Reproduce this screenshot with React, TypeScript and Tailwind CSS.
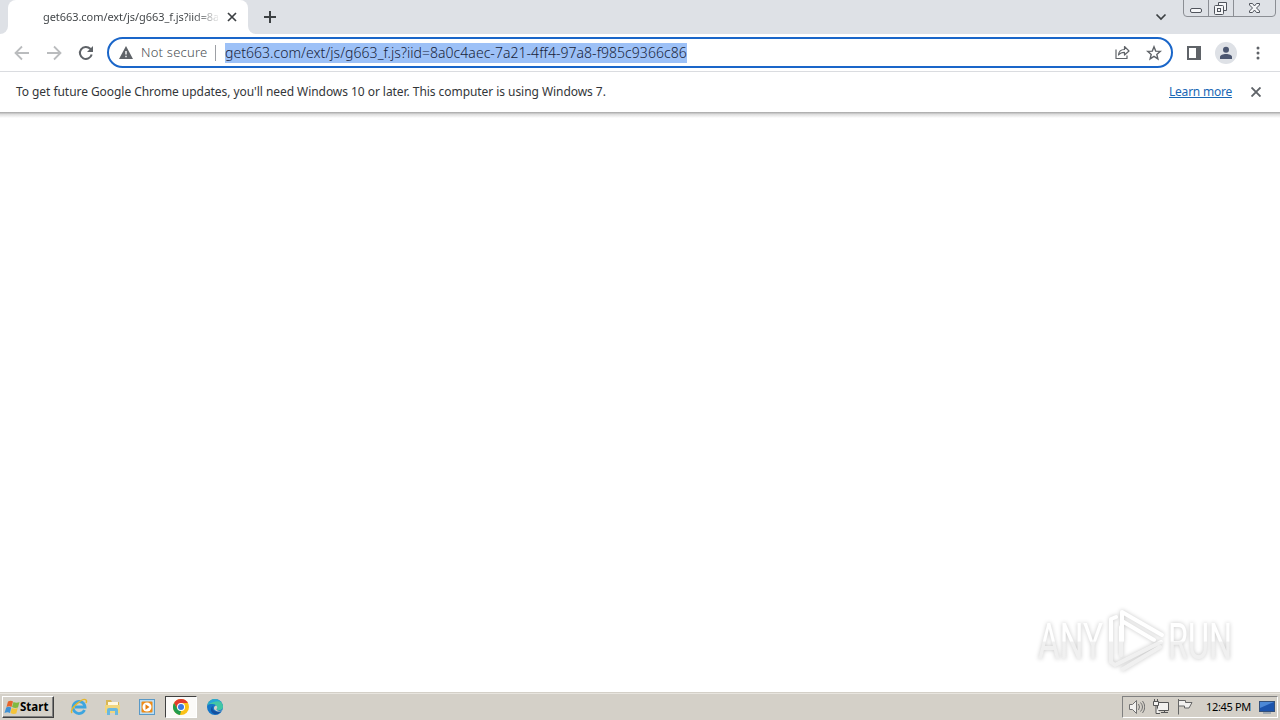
import type { ReactNode } from "react";

const ui = "font-['Noto_Sans','Open_Sans',sans-serif]";

const TabStrip = () => (
    <div className="relative flex h-[34px] bg-[#dee1e6]">
        <div className="w-2 bg-white">
            <div className="h-[34px] rounded-br-lg bg-[#dee1e6]" />
        </div>
        <div className="flex h-[34px] w-60 items-center rounded-t-lg bg-white pl-[35px]">
            <div className="w-[175px] whitespace-nowrap bg-linear-to-r from-[#3c4043] from-85% to-[#3c404320] bg-clip-text text-[11px] leading-4 tracking-[-0.06px] text-transparent">
                get663.com/ext/js/g663_f.js?iid=8a
            </div>
            <svg className="ml-[9px] h-[10px] w-[10px]" viewBox="0 0 10 10" stroke="#3c4043" strokeWidth="1.7">
                <path d="M1 1l8 8M9 1L1 9" />
            </svg>
        </div>
        <div className="w-2 bg-white">
            <div className="h-[34px] rounded-bl-lg bg-[#dee1e6]" />
        </div>
        <svg className="mt-[11px] ml-2 h-3 w-3" viewBox="0 0 12 12" stroke="#3c4043" strokeWidth="2">
            <path d="M6 0v12M0 6h12" />
        </svg>
        <svg className="mt-[13px] ml-auto h-2 w-3" viewBox="0 0 12 8" fill="none" stroke="#3c4043" strokeWidth="1.7">
            <path d="M1.500 1.500L6 6l4.500-4.500" />
        </svg>
        <svg className="mr-1 ml-4 h-[17px] w-[93px]" viewBox="0 0 93 17" fill="none" stroke="#8b8e94">
            <path d="M.5 0v13q0 3.500 3.500 3.500h85q3.500 0 3.500-3.500V0M25.500 0v16M50.500 0v16" />
            <g stroke="#50545c">
                <rect x="7.500" y="8.500" width="11" height="4" rx="1.500" fill="#f5f6f8" />
                <path d="M35.500 5.500v-3h8v8h-3" fill="#f5f6f8" />
                <rect x="31.500" y="5.500" width="9" height="9" rx="1" fill="#f5f6f8" />
                <rect x="34.500" y="8.500" width="3" height="3" />
                <path
                    d="M66.500 3.500h3l2 2.500 2-2.500h3v1.500l-3 3 3 3v1.500h-3l-2-2.500-2 2.500h-3v-1.500l3-3-3-3z"
                    fill="#f5f6f8"
                />
            </g>
        </svg>
    </div>
);

const Toolbar = () => (
    <div className="flex h-[38px] items-center border-b border-[#dadce0] bg-white">
        <svg className="ml-[14px] h-4 w-4" viewBox="0 0 16 16" fill="none" stroke="#babcbe" strokeWidth="1.8">
            <path d="M15 8H2M8 1.500L1.500 8 8 14.500" />
        </svg>
        <svg className="ml-4 h-4 w-4" viewBox="0 0 16 16" fill="none" stroke="#babcbe" strokeWidth="1.8">
            <path d="M1 8h13M8 1.500L14.500 8 8 14.500" />
        </svg>
        <svg className="ml-4 h-4 w-4" viewBox="0 0 16 16" fill="none" stroke="#5f6368" strokeWidth="2">
            <path d="M13.700 9.500A6 6 0 1 1 12.300 3.800L14 5.500" />
            <path d="M15 1v6H9z" fill="#5f6368" stroke="none" />
        </svg>
        <div className="ml-[13px] flex h-[31px] w-[1066px] items-center rounded-full border-2 border-[#1a66c9] bg-white">
            <svg className="ml-[10px] h-[13px] w-[14px]" viewBox="0 0 14 13">
                <path d="M7 0l7 13H0z" fill="#5f6368" />
                <path d="M7 5v3.500M7 9.700v1.500" stroke="#fff" strokeWidth="1.400" />
            </svg>
            <span className="ml-2 w-[67px] whitespace-nowrap text-[13px] font-light tracking-[0.23px] text-[#4b4f54]">
                Not secure
            </span>
            <div className="ml-[7px] h-4 w-px bg-[#9da0a5]" />
            <span className="ml-[9px] h-5 w-[462px] whitespace-nowrap bg-[#9dc1f7] text-[14px] leading-5 font-light tracking-[0.04px] text-[#17233a]">
                get663.com/ext/js/g663_f.js?iid=8a0c4aec-7a21-4ff4-97a8-f985c9366c86
            </span>
            <svg
                className="ml-auto h-[15px] w-4"
                viewBox="0 0 16 15"
                fill="none"
                stroke="#5f6368"
                strokeWidth="1.200"
                strokeLinejoin="round"
            >
                <path d="M1 4.500v9h11v-3M3.500 10c.3-4 2.500-5.500 6-5.500V1.500L14 6 9.500 10V7.300C7 7.300 5 8 3.500 10z" />
            </svg>
            <svg
                className="mr-[9px] ml-[15px] h-4 w-4"
                viewBox="0 0 16 16"
                fill="none"
                stroke="#5f6368"
                strokeWidth="1.400"
            >
                <path d="M8 1.800l1.700 4.300 4.600.3-3.500 3 1.100 4.500L8 11.400l-3.900 2.500 1.100-4.500-3.500-3 4.600-.3z" />
            </svg>
        </div>
        <svg className="ml-[14px] h-[14px] w-[14px]" viewBox="0 0 14 14">
            <rect x="1" y="1" width="12" height="12" fill="none" stroke="#5f6368" strokeWidth="2" />
            <path d="M9 1h4v12H9z" fill="#5f6368" />
        </svg>
        <svg className="ml-[14px] h-[22px] w-[22px]" viewBox="0 0 22 22">
            <circle cx="11" cy="11" r="11" fill="#dee1e6" />
            <circle cx="11" cy="7.700" r="3" fill="#4b5670" />
            <path d="M5 17v-2c0-4 12-4 12 0v2z" fill="#4b5670" />
        </svg>
        <svg className="ml-[19px] h-[14px] w-1" viewBox="0 0 4 14" fill="#5f6368">
            <circle cx="2" cy="2" r="1.500" />
            <circle cx="2" cy="7" r="1.500" />
            <circle cx="2" cy="12" r="1.500" />
        </svg>
    </div>
);

const InfoBar = () => (
    <div className="flex h-10 items-center bg-white pl-4 text-[12px] leading-4">
        <span className="whitespace-nowrap tracking-[-0.055px] text-[#333639]">
            To get future Google Chrome updates, you'll need Windows 10 or later. This computer is using Windows 7.
        </span>
        <a className="ml-auto w-[63px] whitespace-nowrap tracking-[-0.22px] text-[#1967b5] underline">Learn more</a>
        <svg className="mr-[19px] ml-[19px] h-[10px] w-[10px]" viewBox="0 0 10 10" stroke="#5f6368" strokeWidth="1.900">
            <path d="M.5.5l9 9M9.500.5l-9 9" />
        </svg>
    </div>
);

const Watermark = () => (
    <svg className="mr-[36px] mb-[12px] h-[80px] w-[220px] drop-shadow-[0_0_2px_#00000038]" viewBox="0 0 220 80">
        <defs>
            <linearGradient id="fade" gradientUnits="userSpaceOnUse" x1="0" y1="0" x2="0" y2="80">
                <stop offset="0.510" stopColor="#ffffff" />
                <stop offset="0.530" stopColor="#f0f0f0" />
            </linearGradient>
        </defs>
        <g fill="url(#fade)" fontFamily="Roboto" fontSize="50" fontWeight="400">
            <text x="14" y="59" textLength="65" lengthAdjust="spacingAndGlyphs">
                ANY
            </text>
            <text x="144" y="59" textLength="64" lengthAdjust="spacingAndGlyphs">
                RUN
            </text>
        </g>
        <g fill="none" stroke="url(#fade)" strokeWidth="4" strokeLinejoin="round" strokeLinecap="round">
            <path d="M98 41V12l40 23M98 21l32 19" />
            <path d="M92 17l-5 2v43l4 3 46-23M97 27v28M99 69l37-22" />
        </g>
    </svg>
);

const StartFlag = () => (
    <svg className="h-[15px] w-4" viewBox="0 0 16 15">
        <path d="M4 1.500q3-1.500 5 0L7.500 7q-2.500-1.500-5 0z" fill="#e7642b" />
        <path d="M9.500 2q3 1.500 6 0L14 7.500q-3 1-6-.5z" fill="#81b940" />
        <path d="M2.200 7.500q2.500-1.500 5 0L6 13q-2.500-1.500-5.500 0z" fill="#3f91d5" />
        <path d="M7.700 8q3 1.500 6 0L12.300 13.500q-3 1-5.800-.5z" fill="#f5c338" />
    </svg>
);

const ExplorerIcon = () => (
    <svg className="h-[18px] w-[18px]" viewBox="0 0 18 18" fill="none">
        <path d="M14.500 12A6 6 0 1 1 15 9H5" stroke="#3da5df" strokeWidth="2.800" />
        <path d="M2 15C-1 11 13-1 16 2q1 1 0 3" stroke="#e5b72d" strokeWidth="1.500" />
    </svg>
);

const FolderIcon = () => (
    <svg className="h-[18px] w-[18px]" viewBox="0 0 18 18">
        <path d="M2 2h5l1 2h7v10H2z" fill="#d9b754" />
        <path d="M4 4h10v4H4z" fill="#fff8df" />
        <path d="M1 7h15v8H1z" fill="#f1d67d" />
        <path d="M3 17v-5q0-2 2-2h7q2 0 2 2v5h-3v-4H6v4z" fill="#69b8df" />
    </svg>
);

const PlayerIcon = () => (
    <svg className="h-4 w-4" viewBox="0 0 16 16">
        <rect x=".5" y=".5" width="15" height="15" fill="#b9ddf5" stroke="#5999c7" />
        <rect x="2.500" y="2.500" width="11" height="11" rx="1" fill="#ef8b17" />
        <circle cx="8" cy="8" r="4.500" fill="#fff" />
        <path d="M6.500 5.300l4 2.700-4 2.700z" fill="#e57d10" />
    </svg>
);

const ChromeIcon = () => (
    <svg className="h-4 w-4" viewBox="0 0 16 16">
        <circle cx="8" cy="8" r="8" fill="#fbc116" />
        <path d="M1.070 4A8 8 0 0 1 14.930 4H8L4.540 10z" fill="#e33b2e" />
        <path d="M1.070 4l3.470 6L8 12l-1 4A8 8 0 0 1 1.070 4z" fill="#229c4e" />
        <circle cx="8" cy="8" r="4" fill="#fff" />
        <circle cx="8" cy="8" r="3" fill="#3b79e2" />
    </svg>
);

const EdgeIcon = () => (
    <svg className="h-4 w-4" viewBox="0 0 16 16">
        <circle cx="8" cy="8" r="8" fill="#1576c8" />
        <path d="M.5 6C2-1.500 14-2 16 7c.5 4-4 5-6.500 3.500C11 8 9 5 5.500 5 3 5 1 5.500.5 6z" fill="#42c6a5" />
        <path d="M1 5.500C3-1 11-1 14 3 11 1 5 3 1 5.500z" fill="#27a5d8" />
        <path d="M6 7c-2 4 2 7 8 5-3 6-11 3-10-2 .2-1.500 1-2.500 2-3z" fill="#1450a0" />
        <path d="M9 6.500c2 1 1 3 .5 4 1.500 2 4 1.500 6.500.5-3 3-10 1-9-2.500.3-1 1-2 2-2z" fill="#d4d0c8" />
    </svg>
);

const TaskItem = ({ active, children }: { active?: boolean; children: ReactNode }) => (
    <div
        className={
            active
                ? "flex h-[22px] w-8 items-center justify-center border border-t-[#404040] border-r-white border-b-white border-l-[#404040] bg-[#fbfaf8]"
                : "flex h-[22px] w-8 items-center justify-center"
        }
    >
        {children}
    </div>
);

const Taskbar = () => (
    <div className="flex h-[27px] items-center border-t border-[#e8e5df] bg-[#d4d0c8] text-black">
        <div className="ml-[2px] flex h-[22px] w-[52px] items-center border border-t-white border-r-[#404040] border-b-[#404040] border-l-white pl-px shadow-[inset_-1px_-1px_0_#808080]">
            <StartFlag />
            <span className="text-[11.5px] font-bold tracking-[0.02px]">Start</span>
        </div>
        <div className="ml-[9px] flex gap-[2px]">
            <TaskItem>
                <ExplorerIcon />
            </TaskItem>
            <TaskItem>
                <FolderIcon />
            </TaskItem>
            <TaskItem>
                <PlayerIcon />
            </TaskItem>
            <TaskItem active>
                <ChromeIcon />
            </TaskItem>
            <TaskItem>
                <EdgeIcon />
            </TaskItem>
        </div>
        <div className="mr-[2px] ml-auto flex h-[22px] w-[156px] items-center border border-t-[#808080] border-r-white border-b-white border-l-[#808080] pl-[6px]">
            <svg className="h-4 w-4" viewBox="0 0 16 16" fill="#f2f1ef" stroke="#717171">
                <path d="M.5 5.500h3l4-4v13l-4-4h-3z" />
                <path d="M9.500 5q2 3 0 6M11.500 3.500q4 4.500 0 9M13.500 2q4.500 6 0 12" fill="none" />
            </svg>
            <svg className="ml-2 h-4 w-4" viewBox="0 0 16 16" fill="#f2f1ef" stroke="#555">
                <path d="M4.500 3.500h11v8h-11zM8 13.500h7M11.500 12v1" />
                <path d="M.5 2.500h5v4h-5zM1.500 0v2M4.500 0v2M3 7v7.500h4" />
            </svg>
            <svg className="ml-2 h-4 w-4" viewBox="0 0 16 16" fill="#f2f1ef" stroke="#666">
                <path d="M1.500 1.500h7v2h6.500l-3 5.500h-4.500v-2h-6M1.500 0v15.500" />
            </svg>
            <span className="ml-[13px] w-[46px] whitespace-nowrap text-[11px] tracking-[-0.35px]">12:45 PM</span>
            <svg className="ml-[7px] h-[14px] w-4" viewBox="0 0 16 14">
                <rect x=".5" y="1.500" width="15" height="10" fill="#1c54ad" stroke="#345079" />
                <path d="M1 2h14L1 8z" fill="#4c88d6" />
                <path d="M4 13h8" stroke="#6c839e" />
            </svg>
        </div>
    </div>
);

const App = () => {
    return (
        <div className={`flex h-[720px] w-[1280px] flex-col overflow-hidden bg-white ${ui}`}>
            <TabStrip />
            <Toolbar />
            <InfoBar />
            <div className="h-[6px] bg-linear-to-b from-[#a5a5a5] via-[#dedede] via-40% to-white" />
            <main className="flex min-h-0 flex-1 items-end justify-end">
                <Watermark />
            </main>
            <div className="h-px bg-[#d4d0c8]" />
            <Taskbar />
        </div>
    );
};

export default App;
